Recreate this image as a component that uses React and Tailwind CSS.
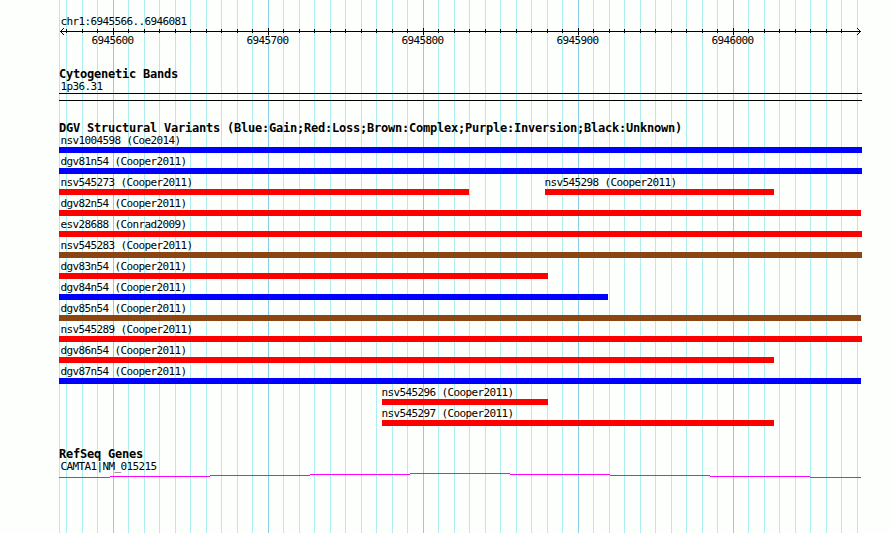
import clsx from "clsx"

const GAIN = "bg-[#0000ff]"
const LOSS = "bg-[#ff0000]"
const COMPLEX = "bg-[#8b4513]"

// start / end are pixels on the 890px wide track image
const rows = [
  [{ name: "nsv1004598 (Coe2014)", start: 59, end: 862, color: GAIN }],
  [{ name: "dgv81n54 (Cooper2011)", start: 59, end: 862, color: GAIN }],
  [
    { name: "nsv545273 (Cooper2011)", start: 59, end: 469, color: LOSS },
    { name: "nsv545298 (Cooper2011)", start: 545, end: 774, color: LOSS },
  ],
  [{ name: "dgv82n54 (Cooper2011)", start: 59, end: 861, color: LOSS }],
  [{ name: "esv28688 (Conrad2009)", start: 59, end: 862, color: LOSS }],
  [{ name: "nsv545283 (Cooper2011)", start: 59, end: 862, color: COMPLEX }],
  [{ name: "dgv83n54 (Cooper2011)", start: 59, end: 548, color: LOSS }],
  [{ name: "dgv84n54 (Cooper2011)", start: 59, end: 608, color: GAIN }],
  [{ name: "dgv85n54 (Cooper2011)", start: 59, end: 861, color: COMPLEX }],
  [{ name: "nsv545289 (Cooper2011)", start: 59, end: 862, color: LOSS }],
  [{ name: "dgv86n54 (Cooper2011)", start: 59, end: 774, color: LOSS }],
  [{ name: "dgv87n54 (Cooper2011)", start: 59, end: 861, color: GAIN }],
  [{ name: "nsv545296 (Cooper2011)", start: 382, end: 548, color: LOSS }],
  [{ name: "nsv545297 (Cooper2011)", start: 382, end: 774, color: LOSS }],
]

const positions = ["6945600", "6945700", "6945800", "6945900", "6946000"]

// one line every 10 bases, alternating 15px and 16px apart
const ticks = []
for (let x = 66; x < 862; x += 31) {
  ticks.push(x)
  if (x + 16 < 862) ticks.push(x + 16)
}
const isMajor = (x) => (x - 113) % 155 === 0

const Grid = () => (
  <svg className="absolute inset-0" width="890" height="533" shapeRendering="crispEdges">
    {[59, ...ticks].map((x) => (
      <rect key={x} x={x} y="0" width="1" height="533" fill={isMajor(x) ? "#87ceeb" : "#afeeee"} />
    ))}
  </svg>
)

const Axis = () => (
  <svg className="mt-px block overflow-visible" width="890" height="6" viewBox="0 28 890 6" shapeRendering="crispEdges">
    <rect x="60" y="31" width="801" height="1" />
    {ticks.slice(0, -1).map((x) => (
      <rect key={x} x={x} y={isMajor(x) ? 28 : 29} width="1" height={isMajor(x) ? 7 : 4} />
    ))}
    {[1, 2, 3].map((d) => (
      <g key={d}>
        <rect x={60 + d} y={31 - d} width="1" height="1" />
        <rect x={60 + d} y={31 + d} width="1" height="1" />
        <rect x={860 - d} y={31 - d} width="1" height="1" />
        <rect x={860 - d} y={31 + d} width="1" height="1" />
      </g>
    ))}
  </svg>
)

const Label = ({ children, className }) => (
  <div className={clsx("h-3 whitespace-pre text-[11px] leading-[14px] tracking-[-0.622px]", className)}>{children}</div>
)

const Title = ({ children }) => (
  <h2 className="ml-[59px] h-3 whitespace-pre text-[12px] font-bold leading-[13px] tracking-[-0.224px]">{children}</h2>
)

const VariantRow = ({ items }) => (
  <div className="flex h-[21px]">
    {items.map((item, i) => {
      const prev = i ? items[i - 1].end : 0
      return (
        <div
          key={item.name}
          className="shrink-0"
          style={{ marginLeft: item.start - prev, width: item.end - item.start }}
        >
          <Label className={item.start === 59 ? "ml-[1.4px]" : "-ml-[0.6px]"}>{item.name}</Label>
          <div className={clsx("mt-px h-1.5", item.color)}></div>
        </div>
      )
    })}
  </div>
)

// [x, y, width] of each step of the gene line
const geneSteps = [
  [59, 4, 51],
  [110, 3, 100],
  [210, 2, 100],
  [310, 1, 100],
  [410, 0, 100],
  [510, 1, 100],
  [610, 2, 100],
  [710, 3, 100],
  [810, 4, 51],
]

const App = () => {
  return (
    <div className="relative h-[533px] w-[890px] overflow-hidden bg-[#fdfffc] font-['DejaVu_Sans_Mono',monospace] text-black">
      <Grid />
      <div className="relative pt-[15px]">
        <Label className="ml-[60.4px]">chr1:6945566..6946081</Label>
        <Axis />
        <div className="flex pl-[91.6px]">
          {positions.map((p) => (
            <Label key={p} className="w-[155px] shrink-0">
              {p}
            </Label>
          ))}
        </div>

        <section className="mt-[22px]">
          <Title>Cytogenetic Bands</Title>
          <Label className="ml-[60.4px]">1p36.31</Label>
          <div className="ml-[59px] mt-px h-2 w-[803px] border-y border-black"></div>
        </section>

        <section className="mt-[21px]">
          <Title>DGV Structural Variants (Blue:Gain;Red:Loss;Brown:Complex;Purple:Inversion;Black:Unknown)</Title>
          {rows.map((items) => (
            <VariantRow key={items[0].name} items={items} />
          ))}
        </section>

        <section className="mt-5">
          <Title>RefSeq Genes</Title>
          <Label className="ml-[60.4px]">CAMTA1|NM_015215</Label>
          <svg className="mt-px block" width="890" height="5" shapeRendering="crispEdges">
            {geneSteps.map(([x, y, w]) => (
              <rect key={x} x={x} y={y} width={w} height="1" fill="#ff00ff" />
            ))}
          </svg>
        </section>
      </div>
    </div>
  )
}

export default App
